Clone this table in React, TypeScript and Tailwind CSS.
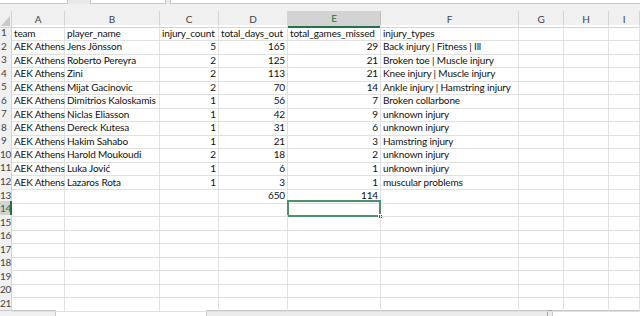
import React from "react";

type V = string | number | null;

const GRID = "grid grid-cols-[12px_53px_95px_59px_69px_93px_138px_45px_45px_1fr]";
const LETTERS = ["A", "B", "C", "D", "E", "F", "G", "H", "I"];

const DATA: V[][] = [
  ["team", "player_name", "injury_count", "total_days_out", "total_games_missed", "injury_types"],
  ["AEK Athens", "Jens Jönsson", 5, 165, 29, "Back injury | Fitness | Ill"],
  ["AEK Athens", "Roberto Pereyra", 2, 125, 21, "Broken toe | Muscle injury"],
  ["AEK Athens", "Zini", 2, 113, 21, "Knee injury | Muscle injury"],
  ["AEK Athens", "Mijat Gacinovic", 2, 70, 14, "Ankle injury | Hamstring injury"],
  ["AEK Athens", "Dimitrios Kaloskamis", 1, 56, 7, "Broken collarbone"],
  ["AEK Athens", "Niclas Eliasson", 1, 42, 9, "unknown injury"],
  ["AEK Athens", "Dereck Kutesa", 1, 31, 6, "unknown injury"],
  ["AEK Athens", "Hakim Sahabo", 1, 21, 3, "Hamstring injury"],
  ["AEK Athens", "Harold Moukoudi", 2, 18, 2, "unknown injury"],
  ["AEK Athens", "Luka Jović", 1, 6, 1, "unknown injury"],
  ["AEK Athens", "Lazaros Rota", 1, 3, 1, "muscular problems"],
  [null, null, null, 650, 114, null],
];

const ROWS: V[][] = Array.from({ length: 21 }, (_, i) => {
  const r = DATA[i] ?? [];
  return Array.from({ length: 9 }, (_, j) => (r[j] === undefined ? null : r[j]));
});

const SEL_ROW = 13;
const SEL_COL = 4;

export default function App() {
  return (
    <div
      className="w-[640px] h-[316px] overflow-hidden bg-white flex flex-col text-[10px] tracking-[-0.15px] text-[#111]"
      style={{ fontFamily: "Lato, 'Noto Sans', sans-serif" }}
    >
      {/* top remnants of formula bar */}
      <div className="h-[4px] flex bg-[#e9e9e9] shrink-0">
        <div className="w-[68px] bg-white border-r border-b border-[#c8c8c8]" />
        <div className="w-[22px]" />
        <div className="w-[76px] bg-white border-x border-b border-[#c8c8c8]" />
        <div className="w-[4px]" />
        <div className="flex-1 bg-white border-l border-b border-[#c8c8c8]" />
      </div>
      {/* gray band */}
      <div className="h-[7px] bg-[#f0f0f0] shrink-0" />
      {/* column headers */}
      <div className={`${GRID} h-[14px] bg-[#f0f0f0] shrink-0 text-[#444]`}>
        <div className="relative border-r border-b border-[#d4d4d4]">
          <svg className="absolute right-[1px] bottom-[1px]" width="9" height="10" viewBox="0 0 9 10">
            <polygon points="9,0 9,10 0,10" fill="#c9c9c9" />
          </svg>
        </div>
        {LETTERS.map((l, j) =>
          j === SEL_COL ? (
            <div
              key={l}
              className="flex items-center justify-center bg-[#d3d3d3] border-r border-[#bdbdbd] border-b-2 border-b-[#217346] text-[#217346]"
            >
              {l}
            </div>
          ) : (
            <div key={l} className="flex items-center justify-center border-r border-b border-[#d4d4d4]">
              {l}
            </div>
          )
        )}
      </div>
      {/* rows */}
      <div className="flex flex-col shrink-0">
        {ROWS.map((row, i) => (
          <div key={i} className={`${GRID} h-[13.55px] shrink-0`}>
            <div
              className={`flex items-center justify-start whitespace-nowrap tracking-[-0.4px] ${
                i + 1 < 10 ? "pl-[1px]" : "pl-0"
              } ${
                i === SEL_ROW
                  ? "bg-[#d3d3d3] border-r-2 border-r-[#217346] border-b border-[#c8c8c8] text-[#217346]"
                  : "bg-[#f0f0f0] border-r border-b border-[#d4d4d4] text-[#444]"
              }`}
            >
              {i + 1}
            </div>
            {row.map((v, j) => {
              const num = typeof v === "number";
              return (
                <div
                  key={j}
                  className={`relative flex items-center px-[2px] whitespace-nowrap leading-none border-r border-b border-[#e1e1e1] ${
                    num ? "justify-end" : "justify-start"
                  }`}
                >
                  {v !== null ? <span>{v}</span> : null}
                  {i === SEL_ROW && j === SEL_COL ? (
                    <>
                      <div className="absolute left-[-1px] top-[-1px] right-[-1px] bottom-[-1px] border-2 border-[#4f9168]" />
                      <div className="absolute right-[-3px] bottom-[-3px] w-[5px] h-[5px] bg-[#217346] border border-white" />
                    </>
                  ) : null}
                </div>
              );
            })}
          </div>
        ))}
      </div>
      <div className="flex-1" />
      {/* bottom strip */}
      <div className="h-[6px] flex shrink-0 bg-white">
        <div className="w-[56px] bg-[#f0f0f0] border-t border-r border-[#c8c8c8]" />
        <div className="w-[150px] bg-white" />
        <div className="w-[341px] bg-[#ececec] border-t border-l border-[#c8c8c8]" />
        <div className="w-[5px] bg-[#ececec] border-t border-l border-[#a8a8a8]" />
        <div className="flex-1 bg-white border-t border-l border-[#c8c8c8]" />
      </div>
    </div>
  );
}
